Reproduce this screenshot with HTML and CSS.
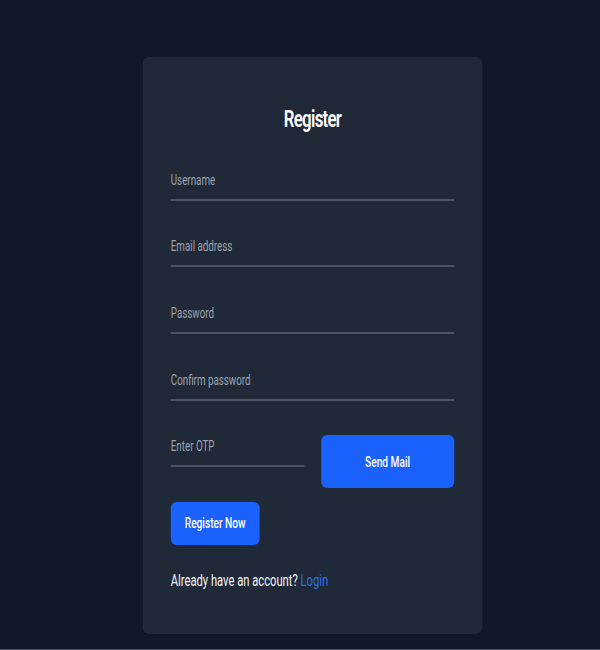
FILE: index.html
```html
<!DOCTYPE html>
<html lang="en">
<head>
<meta charset="utf-8">
<title>Register</title>
<link rel="stylesheet" href="styles.css">
</head>
<body>
<main class="page">
  <form class="card">
    <h1 class="title">Register</h1>
    <div class="fields">
      <input class="field" type="text" placeholder="Username">
      <input class="field" type="email" placeholder="Email address">
      <input class="field" type="password" placeholder="Password">
      <input class="field" type="password" placeholder="Confirm password">
      <div class="otp-row">
        <input class="field" type="text" placeholder="Enter OTP">
        <button class="btn btn-send" type="button">Send Mail</button>
      </div>
    </div>
    <button class="btn btn-register" type="submit">Register Now</button>
    <p class="switch">Already have an account? <a class="link" href="#">Login</a></p>
  </form>
</main>
</body>
</html>
```

FILE: styles.css
```css
* {
  box-sizing: border-box;
}

html, body {
  margin: 0;
  padding: 0;
  background: #111827;
}

.page {
  height: 650px;
  border-bottom: 1px solid #4a5260;
  background: #111827;
  display: flex;
  justify-content: center;
  align-items: flex-start;
  padding: 56.7px 0 0 25px;
  font-family: Roboto, "Liberation Sans", sans-serif;
}

.card {
  width: 485px;
  margin: 0;
  background: #1f2937;
  border-radius: 8.5px / 6px;
  padding: 46px 40px 40.8px;
  display: flex;
  flex-direction: column;
  align-items: flex-start;
  transform: scaleX(0.7);
}

.title {
  align-self: stretch;
  margin: 0 0 26px;
  text-align: center;
  color: #ffffff;
  font-size: 24px;
  font-weight: 600;
  line-height: 32px;
  letter-spacing: -1px;
}

.fields {
  align-self: stretch;
  display: flex;
  flex-direction: column;
  gap: 26.67px;
}

.field {
  display: block;
  width: 100%;
  height: 40px;
  margin: 0;
  padding: 9px 0 9px;
  border: 0;
  border-bottom: 2px solid #4b5563;
  border-radius: 0;
  background: transparent;
  color: #ffffff;
  font-family: Roboto, "Liberation Sans", sans-serif;
  font-size: 14px;
  line-height: 20px;
  outline: none;
}

.field::placeholder {
  color: #9ca3af;
  opacity: 1;
}

.otp-row {
  display: grid;
  grid-template-columns: 1fr 1fr;
  column-gap: 24px;
  align-items: start;
}

.btn {
  border: 0;
  border-radius: 8.5px / 6px;
  background: #1a61fe;
  color: #ffffff;
  font-family: Roboto, "Liberation Sans", sans-serif;
  font-size: 14.5px;
  font-weight: 500;
  cursor: pointer;
}

.btn-send {
  width: 100%;
  height: 53px;
  margin-top: 8px;
  padding: 2px 0 0;
}

.btn-register {
  height: 42.7px;
  margin-top: 13.5px;
  padding: 0 20px;
}

.switch {
  margin: 24.8px 0 0;
  color: #f3f4f6;
  font-size: 16px;
  line-height: 24px;
}

.link {
  color: #2f70e6;
  text-decoration: none;
}
```
